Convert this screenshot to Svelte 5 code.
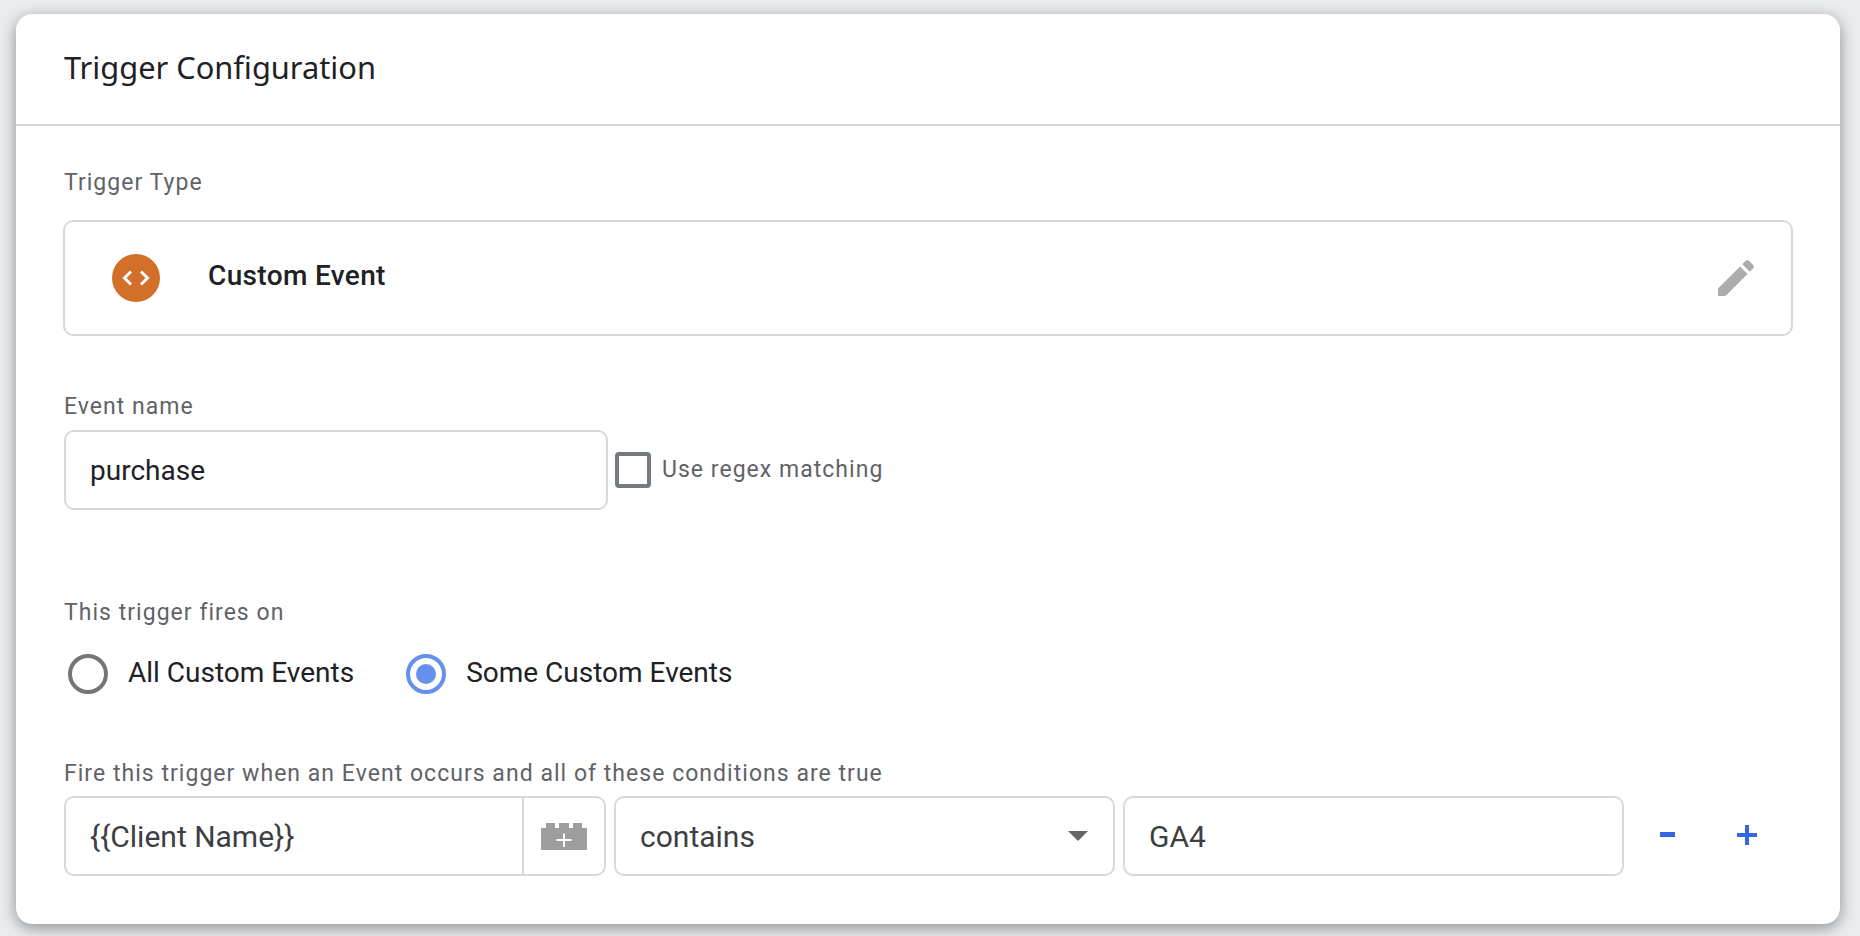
<script>
	let eventName = "purchase";
	let fireOn = "some";
</script>

<div class="card">
	<div class="card-title">Trigger Configuration</div>

	<div class="card-body">
		<div class="label">Trigger Type</div>
		<div class="type-box">
			<div class="type-icon">
				<svg width="30" height="30" viewBox="0 0 30 30" fill="none" stroke="#fff" stroke-width="3">
					<path d="M10 8.5 3.5 15l6.5 6.5" />
					<path d="M20 8.5l6.5 6.5-6.5 6.5" />
				</svg>
			</div>
			<div class="type-name">Custom Event</div>
			<svg class="pencil" width="48" height="48" viewBox="0 0 24 24" fill="#adadad">
				<path d="M3 17.25V21h3.75L17.81 9.94l-3.75-3.75L3 17.25zM20.71 7.04c.39-.39.39-1.02 0-1.41l-2.34-2.34c-.39-.39-1.02-.39-1.41 0l-1.83 1.83 3.75 3.75 1.83-1.83z" />
			</svg>
		</div>

		<div class="label event-label">Event name</div>
		<div class="event-row">
			<input class="field event-input" bind:value={eventName} />
			<div class="checkbox"></div>
			<div class="check-label">Use regex matching</div>
		</div>

		<div class="label fires-label">This trigger fires on</div>
		<div class="radios">
			<!-- svelte-ignore a11y_click_events_have_key_events, a11y_no_static_element_interactions -->
			<div class="radio-item first" onclick={() => (fireOn = "all")}>
				<div class="radio" class:on={fireOn === "all"}></div>
				<span>All Custom Events</span>
			</div>
			<!-- svelte-ignore a11y_click_events_have_key_events, a11y_no_static_element_interactions -->
			<div class="radio-item" onclick={() => (fireOn = "some")}>
				<div class="radio" class:on={fireOn === "some"}></div>
				<span>Some Custom Events</span>
			</div>
		</div>

		<div class="label cond-label">Fire this trigger when an Event occurs and all of these conditions are true</div>
		<div class="cond-row">
			<div class="field variable">
				<div class="variable-text">&#123;&#123;Client Name&#125;&#125;</div>
				<div class="variable-btn">
					<svg width="46" height="27" viewBox="0 0 46 27">
						<path fill="#9e9e9e" d="M0 5h5V0h9v5h4V0h10v5h4V0h9v5h5v22H0z" />
						<path fill="#fff" d="M22 10.5h2v5.5h6.5v2H24v6h-2v-6h-6.5v-2H22z" />
					</svg>
				</div>
			</div>
			<div class="field select">
				<span>contains</span>
				<svg width="20" height="10" viewBox="0 0 20 10"><path fill="#666" d="M0 0h20L10 10z" /></svg>
			</div>
			<div class="field value">GA4</div>
			<div class="cond-btns">
				<svg class="minus" width="15" height="5" viewBox="0 0 15 5"><rect width="15" height="5" fill="#3367e0" /></svg>
				<svg class="plus" width="20" height="20" viewBox="0 0 20 20"><path fill="#3367e0" d="M8 0h4v8h8v4h-8v8H8v-8H0V8h8z" /></svg>
			</div>
		</div>
	</div>
</div>

<style>
	:global(body) {
		background-color: #ebedef;
		font-family: Roboto, "Liberation Sans", sans-serif;
	}

	.card {
		box-sizing: border-box;
		width: 1824px;
		height: 910px;
		margin: 14px 20px 12px 16px;
		background-color: #fff;
		border-radius: 16px;
		box-shadow: 0 4px 16px rgba(60, 64, 67, 0.55);
	}

	.card-title {
		box-sizing: border-box;
		height: 112px;
		padding: 33px 0 0 48px;
		font-family: "Noto Sans", Roboto, sans-serif;
		font-size: 30.8px;
		line-height: 40px;
		color: #202124;
		border-bottom: 2px solid #d9d8de;
	}

	.card-body {
		padding: 43px 47px 0 48px;
	}

	.label {
		height: 28px;
		font-size: 23px;
		line-height: 28px;
		letter-spacing: 1.03px;
		color: #5f6368;
	}

	.type-box {
		box-sizing: border-box;
		display: flex;
		align-items: center;
		height: 116px;
		margin: 23px 0 0 -1px;
		padding: 0 31px 0 47px;
		border: 2px solid #d9d8de;
		border-radius: 10px;
	}

	.type-icon {
		display: flex;
		align-items: center;
		justify-content: center;
		width: 48px;
		height: 48px;
		background-color: #d2702a;
		border-radius: 50%;
	}

	.type-name {
		flex: 1;
		margin: 0 0 6px 48px;
		font-size: 28px;
		font-weight: 500;
		letter-spacing: 0.35px;
		color: #202124;
	}

	.event-label {
		margin-top: 57px;
	}

	.event-row {
		display: flex;
		align-items: center;
		margin-top: 9px;
	}

	.field {
		box-sizing: border-box;
		height: 80px;
		border: 2px solid #d9d8de;
		border-radius: 10px;
		font-family: inherit;
		font-size: 30px;
		color: #3c4043;
		background: #fff;
	}

	.event-input {
		width: 544px;
		padding: 0 24px;
		font-size: 28px;
		color: #202124;
		outline: none;
	}

	.checkbox {
		box-sizing: border-box;
		width: 36px;
		height: 36px;
		margin-left: 7px;
		border: 4px solid #757a80;
		border-radius: 4px;
	}

	.check-label {
		margin: 0 0 2px 11px;
		font-size: 23px;
		letter-spacing: 1.03px;
		color: #5f6368;
	}

	.fires-label {
		margin-top: 89px;
	}

	.radios {
		display: flex;
		margin-top: 27px;
		padding-left: 4px;
		height: 40px;
	}

	.radio-item {
		display: flex;
		align-items: center;
		gap: 20px;
		font-size: 28px;
		color: #202124;
		cursor: pointer;
	}

	.radio-item span {
		margin-bottom: 3px;
	}

	.radio-item.first {
		margin-right: 52px;
	}

	.radio {
		box-sizing: border-box;
		display: flex;
		align-items: center;
		justify-content: center;
		width: 40px;
		height: 40px;
		margin-top: -1px;
		border: 4px solid #757575;
		border-radius: 50%;
	}

	.radio.on {
		border-color: #6690ee;
	}

	.radio.on::after {
		content: "";
		width: 20px;
		height: 20px;
		background-color: #6690ee;
		border-radius: 50%;
	}

	.cond-label {
		margin-top: 66px;
	}

	.cond-row {
		display: flex;
		align-items: center;
		margin-top: 8px;
	}

	.variable {
		display: flex;
		width: 542px;
	}

	.variable-text {
		flex: 1;
		padding-left: 24px;
		line-height: 78px;
	}

	.variable-btn {
		display: flex;
		align-items: center;
		justify-content: center;
		width: 80px;
		border-left: 2px solid #d9d8de;
	}

	.select {
		display: flex;
		align-items: center;
		justify-content: space-between;
		width: 501px;
		margin-left: 8px;
		padding: 0 25px 0 24px;
	}

	.value {
		width: 501px;
		margin-left: 8px;
		padding-left: 24px;
		line-height: 78px;
	}

	.cond-btns {
		display: flex;
		align-items: center;
		padding: 0 0 2px 36px;
	}

	.minus {
		margin-bottom: 2px;
	}

	.plus {
		margin-left: 62px;
	}
</style>
